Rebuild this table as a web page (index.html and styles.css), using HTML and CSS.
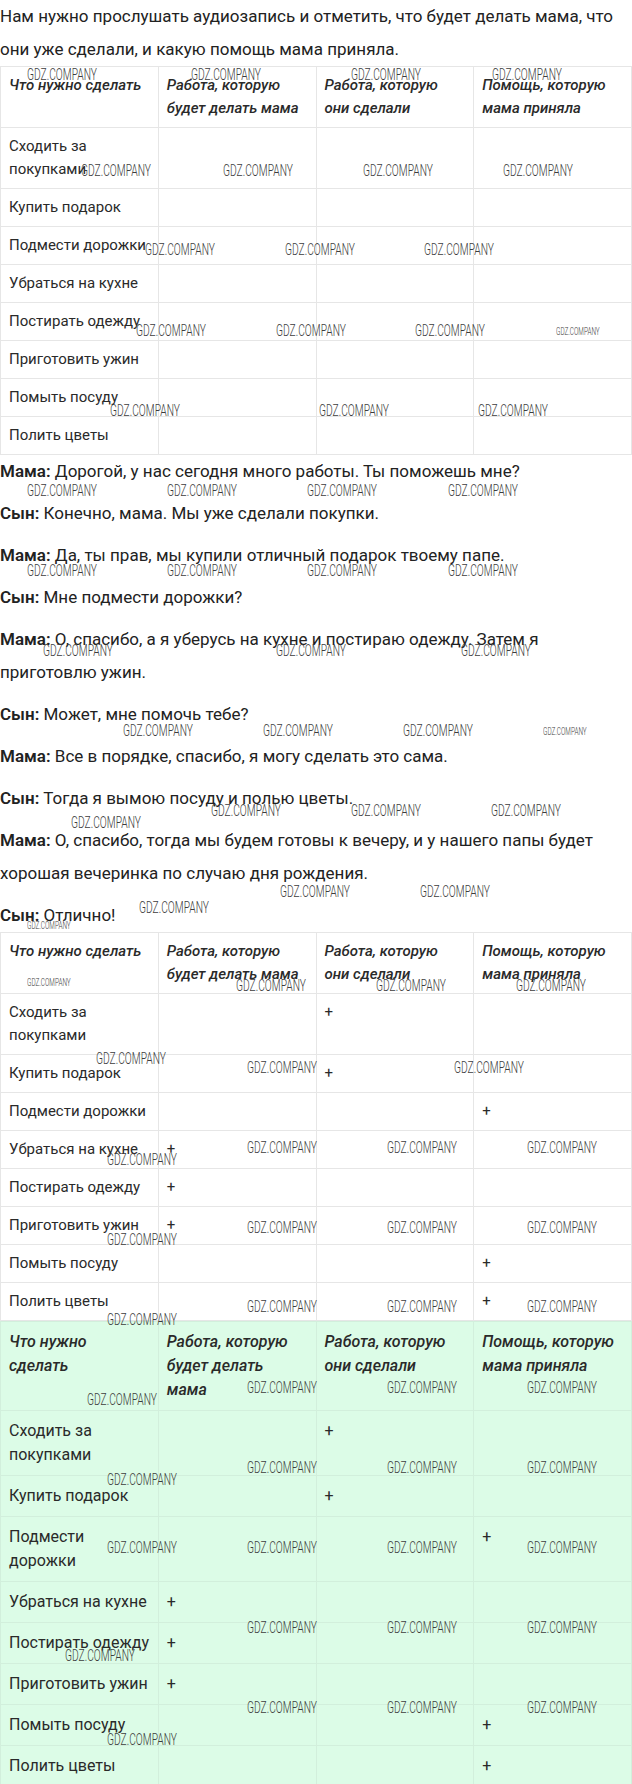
FILE: index.html
```html
<!DOCTYPE html>
<html lang="ru">
<head>
<meta charset="utf-8">
<title>Задание</title>
<link rel="stylesheet" href="styles.css">
</head>
<body>
<div class="page">
  <p class="intro">Нам нужно прослушать аудиозапись и отметить, что будет делать мама, что они уже сделали, и какую помощь мама приняла.</p>

  <table class="grid">
    <tr class="head"><th>Что нужно сделать</th><th>Работа, которую будет делать мама</th><th>Работа, которую они сделали</th><th>Помощь, которую мама приняла</th></tr>
    <tr><td>Сходить за покупками</td><td></td><td></td><td></td></tr>
    <tr><td>Купить подарок</td><td></td><td></td><td></td></tr>
    <tr><td>Подмести дорожки</td><td></td><td></td><td></td></tr>
    <tr><td>Убраться на кухне</td><td></td><td></td><td></td></tr>
    <tr><td>Постирать одежду</td><td></td><td></td><td></td></tr>
    <tr><td>Приготовить ужин</td><td></td><td></td><td></td></tr>
    <tr><td>Помыть посуду</td><td></td><td></td><td></td></tr>
    <tr><td>Полить цветы</td><td></td><td></td><td></td></tr>
  </table>

  <div class="dialog">
    <p><b>Мама:</b> Дорогой, у нас сегодня много работы. Ты поможешь мне?</p>
    <p><b>Сын:</b> Конечно, мама. Мы уже сделали покупки.</p>
    <p><b>Мама:</b> Да, ты прав, мы купили отличный подарок твоему папе.</p>
    <p><b>Сын:</b> Мне подмести дорожки?</p>
    <p><b>Мама:</b> О, спасибо, а я уберусь на кухне и постираю одежду. Затем я приготовлю ужин.</p>
    <p><b>Сын:</b> Может, мне помочь тебе?</p>
    <p><b>Мама:</b> Все в порядке, спасибо, я могу сделать это сама.</p>
    <p><b>Сын:</b> Тогда я вымою посуду и полью цветы.</p>
    <p><b>Мама:</b> О, спасибо, тогда мы будем готовы к вечеру, и у нашего папы будет хорошая вечеринка по случаю дня рождения.</p>
    <p><b>Сын:</b> Отлично!</p>
  </div>

  <table class="grid">
    <tr class="head"><th>Что нужно сделать</th><th>Работа, которую будет делать мама</th><th>Работа, которую они сделали</th><th>Помощь, которую мама приняла</th></tr>
    <tr><td>Сходить за покупками</td><td></td><td>+</td><td></td></tr>
    <tr><td>Купить подарок</td><td></td><td>+</td><td></td></tr>
    <tr><td>Подмести дорожки</td><td></td><td></td><td>+</td></tr>
    <tr><td>Убраться на кухне</td><td>+</td><td></td><td></td></tr>
    <tr><td>Постирать одежду</td><td>+</td><td></td><td></td></tr>
    <tr><td>Приготовить ужин</td><td>+</td><td></td><td></td></tr>
    <tr><td>Помыть посуду</td><td></td><td></td><td>+</td></tr>
    <tr><td>Полить цветы</td><td></td><td></td><td>+</td></tr>
  </table>

  <table class="grid answer">
    <tr class="head"><th>Что нужно<br>сделать</th><th>Работа, которую<br>будет делать<br>мама</th><th>Работа, которую<br>они сделали</th><th>Помощь, которую<br>мама приняла</th></tr>
    <tr><td>Сходить за<br>покупками</td><td></td><td>+</td><td></td></tr>
    <tr><td>Купить подарок</td><td></td><td>+</td><td></td></tr>
    <tr><td>Подмести<br>дорожки</td><td></td><td></td><td>+</td></tr>
    <tr><td>Убраться на кухне</td><td>+</td><td></td><td></td></tr>
    <tr><td>Постирать одежду</td><td>+</td><td></td><td></td></tr>
    <tr><td>Приготовить ужин</td><td>+</td><td></td><td></td></tr>
    <tr><td>Помыть посуду</td><td></td><td></td><td>+</td></tr>
    <tr><td>Полить цветы</td><td></td><td></td><td>+</td></tr>
  </table>

  <div class="marks" aria-hidden="true">
    <span class="wm" style="left:27px;top:67px">GDZ.COMPANY</span>
    <span class="wm" style="left:191px;top:67px">GDZ.COMPANY</span>
    <span class="wm" style="left:351px;top:67px">GDZ.COMPANY</span>
    <span class="wm" style="left:492px;top:67px">GDZ.COMPANY</span>

    <span class="wm" style="left:81px;top:163px">GDZ.COMPANY</span>
    <span class="wm" style="left:223px;top:163px">GDZ.COMPANY</span>
    <span class="wm" style="left:363px;top:163px">GDZ.COMPANY</span>
    <span class="wm" style="left:503px;top:163px">GDZ.COMPANY</span>

    <span class="wm" style="left:145px;top:242px">GDZ.COMPANY</span>
    <span class="wm" style="left:285px;top:242px">GDZ.COMPANY</span>
    <span class="wm" style="left:424px;top:242px">GDZ.COMPANY</span>

    <span class="wm" style="left:136px;top:323px">GDZ.COMPANY</span>
    <span class="wm" style="left:276px;top:323px">GDZ.COMPANY</span>
    <span class="wm" style="left:415px;top:323px">GDZ.COMPANY</span>
    <span class="wm small" style="left:556px;top:327px">GDZ.COMPANY</span>

    <span class="wm" style="left:110px;top:403px">GDZ.COMPANY</span>
    <span class="wm" style="left:319px;top:403px">GDZ.COMPANY</span>
    <span class="wm" style="left:478px;top:403px">GDZ.COMPANY</span>

    <span class="wm" style="left:27px;top:483px">GDZ.COMPANY</span>
    <span class="wm" style="left:167px;top:483px">GDZ.COMPANY</span>
    <span class="wm" style="left:307px;top:483px">GDZ.COMPANY</span>
    <span class="wm" style="left:448px;top:483px">GDZ.COMPANY</span>

    <span class="wm" style="left:27px;top:563px">GDZ.COMPANY</span>
    <span class="wm" style="left:167px;top:563px">GDZ.COMPANY</span>
    <span class="wm" style="left:307px;top:563px">GDZ.COMPANY</span>
    <span class="wm" style="left:448px;top:563px">GDZ.COMPANY</span>

    <span class="wm" style="left:43px;top:643px">GDZ.COMPANY</span>
    <span class="wm" style="left:276px;top:643px">GDZ.COMPANY</span>
    <span class="wm" style="left:461px;top:643px">GDZ.COMPANY</span>

    <span class="wm" style="left:123px;top:723px">GDZ.COMPANY</span>
    <span class="wm" style="left:263px;top:723px">GDZ.COMPANY</span>
    <span class="wm" style="left:403px;top:723px">GDZ.COMPANY</span>
    <span class="wm small" style="left:543px;top:727px">GDZ.COMPANY</span>

    <span class="wm" style="left:211px;top:803px">GDZ.COMPANY</span>
    <span class="wm" style="left:351px;top:803px">GDZ.COMPANY</span>
    <span class="wm" style="left:491px;top:803px">GDZ.COMPANY</span>
    <span class="wm" style="left:71px;top:815px">GDZ.COMPANY</span>

    <span class="wm" style="left:280px;top:884px">GDZ.COMPANY</span>
    <span class="wm" style="left:420px;top:884px">GDZ.COMPANY</span>
    <span class="wm" style="left:139px;top:900px">GDZ.COMPANY</span>
    <span class="wm small" style="left:27px;top:921px">GDZ.COMPANY</span>

    <span class="wm small" style="left:27px;top:978px">GDZ.COMPANY</span>
    <span class="wm" style="left:236px;top:978px">GDZ.COMPANY</span>
    <span class="wm" style="left:376px;top:978px">GDZ.COMPANY</span>
    <span class="wm" style="left:516px;top:978px">GDZ.COMPANY</span>

    <span class="wm" style="left:96px;top:1051px">GDZ.COMPANY</span>
    <span class="wm" style="left:247px;top:1060px">GDZ.COMPANY</span>
    <span class="wm" style="left:454px;top:1060px">GDZ.COMPANY</span>

    <span class="wm" style="left:247px;top:1140px">GDZ.COMPANY</span>
    <span class="wm" style="left:387px;top:1140px">GDZ.COMPANY</span>
    <span class="wm" style="left:527px;top:1140px">GDZ.COMPANY</span>
    <span class="wm" style="left:107px;top:1152px">GDZ.COMPANY</span>

    <span class="wm" style="left:247px;top:1220px">GDZ.COMPANY</span>
    <span class="wm" style="left:387px;top:1220px">GDZ.COMPANY</span>
    <span class="wm" style="left:527px;top:1220px">GDZ.COMPANY</span>
    <span class="wm" style="left:107px;top:1232px">GDZ.COMPANY</span>

    <span class="wm" style="left:247px;top:1299px">GDZ.COMPANY</span>
    <span class="wm" style="left:387px;top:1299px">GDZ.COMPANY</span>
    <span class="wm" style="left:527px;top:1299px">GDZ.COMPANY</span>
    <span class="wm" style="left:107px;top:1312px">GDZ.COMPANY</span>

    <span class="wm" style="left:247px;top:1380px">GDZ.COMPANY</span>
    <span class="wm" style="left:387px;top:1380px">GDZ.COMPANY</span>
    <span class="wm" style="left:527px;top:1380px">GDZ.COMPANY</span>
    <span class="wm" style="left:87px;top:1392px">GDZ.COMPANY</span>

    <span class="wm" style="left:247px;top:1460px">GDZ.COMPANY</span>
    <span class="wm" style="left:387px;top:1460px">GDZ.COMPANY</span>
    <span class="wm" style="left:527px;top:1460px">GDZ.COMPANY</span>
    <span class="wm" style="left:107px;top:1472px">GDZ.COMPANY</span>

    <span class="wm" style="left:107px;top:1540px">GDZ.COMPANY</span>
    <span class="wm" style="left:247px;top:1540px">GDZ.COMPANY</span>
    <span class="wm" style="left:387px;top:1540px">GDZ.COMPANY</span>
    <span class="wm" style="left:527px;top:1540px">GDZ.COMPANY</span>

    <span class="wm" style="left:247px;top:1620px">GDZ.COMPANY</span>
    <span class="wm" style="left:387px;top:1620px">GDZ.COMPANY</span>
    <span class="wm" style="left:527px;top:1620px">GDZ.COMPANY</span>
    <span class="wm" style="left:65px;top:1648px">GDZ.COMPANY</span>

    <span class="wm" style="left:247px;top:1700px">GDZ.COMPANY</span>
    <span class="wm" style="left:387px;top:1700px">GDZ.COMPANY</span>
    <span class="wm" style="left:527px;top:1700px">GDZ.COMPANY</span>
    <span class="wm" style="left:107px;top:1732px">GDZ.COMPANY</span>
  </div>
</div>
</body>
</html>
```

FILE: styles.css
```css
html, body {
  margin: 0;
  padding: 0;
  background: #ffffff;
}

body {
  font-family: Roboto, "Noto Sans", "Liberation Sans", sans-serif;
  color: #222222;
  font-size: 17px;
}

.page {
  position: relative;
  width: 632px;
  height: 1784px;
  overflow: hidden;
}

.intro {
  margin: 0;
  line-height: 33px;
}

.grid {
  width: 100%;
  table-layout: fixed;
  border-collapse: collapse;
  font-size: 15px;
  line-height: 23px;
}

.grid th,
.grid td {
  border: 1px solid #e6e6e6;
  padding: 7px 8px;
  text-align: left;
  vertical-align: top;
}

.grid th {
  font-style: italic;
  font-weight: 500;
  color: #2a2a2a;
}

.grid td {
  color: #2a2a2a;
}

.answer {
  background: #dcfce7;
  font-size: 16px;
  line-height: 24px;
}

.answer th,
.answer td {
  border-color: #d2efdc;
  padding: 8px 8px;
  white-space: nowrap;
}

.dialog p {
  margin: 0 0 9px;
  line-height: 33px;
}

.dialog p:last-child {
  margin-bottom: 0;
}

.dialog b {
  font-weight: 600;
}

.marks {
  position: absolute;
  inset: 0;
  pointer-events: none;
}

.wm {
  position: absolute;
  font-family: Roboto, "Liberation Sans", sans-serif;
  font-weight: 300;
  font-size: 16px;
  line-height: 16px;
  color: #3c3c3c;
  white-space: nowrap;
  transform: scaleX(0.64);
  transform-origin: 0 0;
}

.wm.small {
  font-size: 10px;
  line-height: 10px;
}
```
